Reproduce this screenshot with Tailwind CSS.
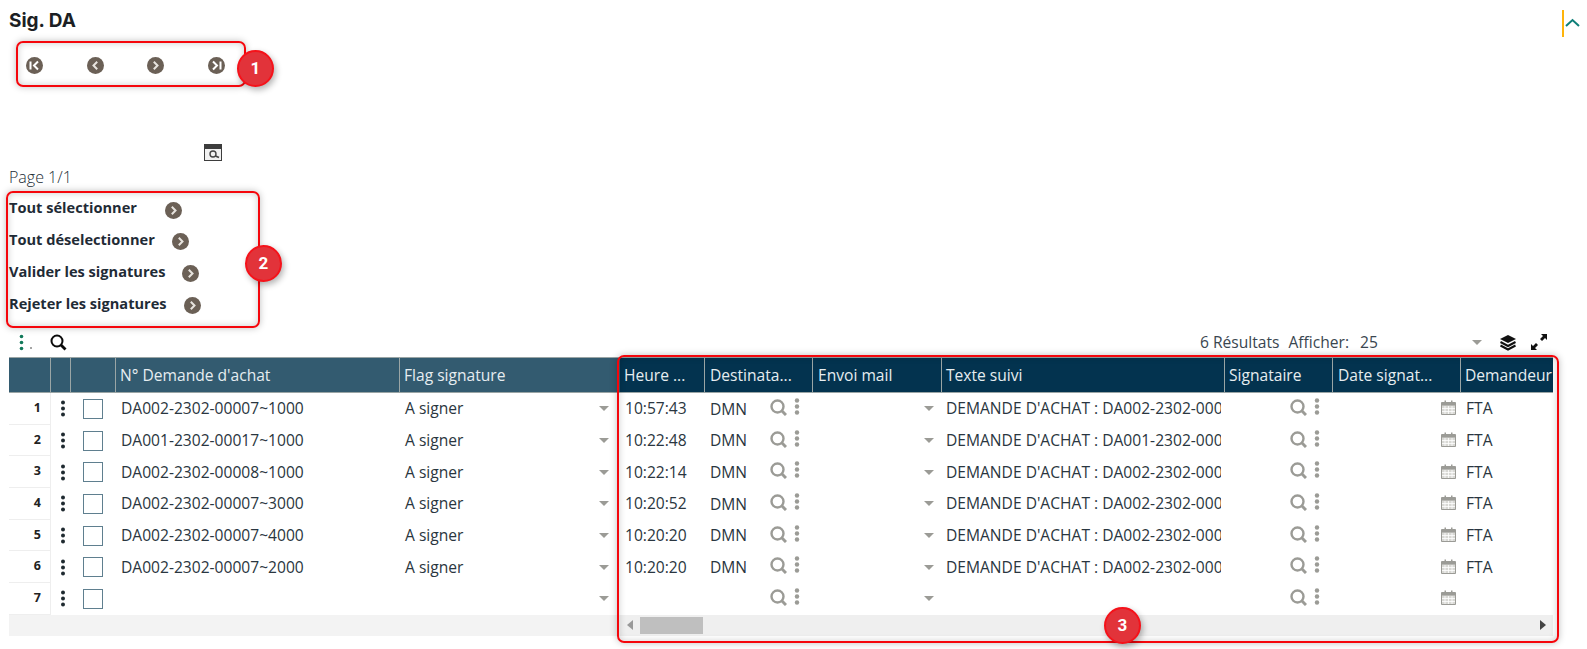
<!DOCTYPE html>
<html lang="fr">
<head>
  <meta charset="UTF-8">
  <title>Sig. DA</title>
  <script src="https://cdn.jsdelivr.net/npm/@tailwindcss/browser@4"></script>
</head>
<body class="bg-white font-['Open_Sans',sans-serif] text-[#2b3a45] overflow-hidden">
  <svg class="hidden">
    <symbol id="first" viewBox="0 0 17 17"><circle cx="8.5" cy="8.5" r="8.5" fill="#6b6056"/><path d="M4.5 4.5v8M12 4.5L8 8.5l4 4" fill="none" stroke="#fff" stroke-width="2"/></symbol>
    <symbol id="prev" viewBox="0 0 17 17"><circle cx="8.5" cy="8.5" r="8.5" fill="#6b6056"/><path d="M10.2 4.8L6.5 8.5l3.7 3.7" fill="none" stroke="#e8e4df" stroke-width="2"/></symbol>
    <symbol id="next" viewBox="0 0 17 17"><circle cx="8.5" cy="8.5" r="8.5" fill="#6b6056"/><path d="M6.8 4.8l3.7 3.7-3.7 3.7" fill="none" stroke="#e8e4df" stroke-width="2"/></symbol>
    <symbol id="last" viewBox="0 0 17 17"><circle cx="8.5" cy="8.5" r="8.5" fill="#6b6056"/><path d="M5 4.5l4 4-4 4M12.5 4.5v8" fill="none" stroke="#fff" stroke-width="2"/></symbol>
    <symbol id="mag" viewBox="0 0 17 17"><circle cx="7.500" cy="7.500" r="6" fill="none" stroke="#9b9b96" stroke-width="2.400"/><path d="M12 12l4 4" stroke="#9b9b96" stroke-width="3"/></symbol>
    <symbol id="vdots" viewBox="0 0 6 17"><circle cx="3" cy="2.5" r="2.2" fill="#9b9b96"/><circle cx="3" cy="8.5" r="2.2" fill="#9b9b96"/><circle cx="3" cy="14.5" r="2.2" fill="#9b9b96"/></symbol>
    <symbol id="kebab" viewBox="0 0 6 17"><circle cx="3" cy="2.5" r="2" fill="#1f2a30"/><circle cx="3" cy="8.5" r="2" fill="#1f2a30"/><circle cx="3" cy="14.5" r="2" fill="#1f2a30"/></symbol>
    <symbol id="cal" viewBox="0 0 15 15"><path d="M.5 2.5h14v12H.5z" fill="#d8d8d4" stroke="#9b9b96"/><path d="M1 2.500h13v3H1z" fill="#9b9b96"/><path d="M3.500.5H5v3H3.500zM10 .5h1.500v3H10z" fill="#9b9b96"/><path d="M4 6v8M7.500 6v8M11 6v8M1 8.500h13M1 11.500h13" stroke="#fff" stroke-width=".8"/></symbol>
    <symbol id="caret" viewBox="0 0 10 5"><path d="M0 0h10L5 5z" fill="#9b9b96"/></symbol>
  </svg>

  <div class="relative w-[1587px] h-[649px] pl-[9px]">
    <!-- en-tete -->
    <div class="h-[42px] flex items-center font-['Inter',sans-serif] font-bold text-[19px] text-[#1c1f24]">Sig. DA</div>
    <div class="h-[46px] w-[199px] ml-[17px] flex items-center justify-between">
      <svg class="w-[17px] h-[17px]"><use href="#first"/></svg>
      <svg class="w-[17px] h-[17px]"><use href="#prev"/></svg>
      <svg class="w-[17px] h-[17px]"><use href="#next"/></svg>
      <svg class="w-[17px] h-[17px]"><use href="#last"/></svg>
    </div>
    <svg class="mt-[56px] ml-[195px] w-[18px] h-[17px]" viewBox="0 0 18 17">
      <path d="M0 0h18v17H0z" fill="#3d3d3d"/><path d="M1 5h16v11H1z" fill="#f1f1f1"/>
      <circle cx="9" cy="10" r="3" fill="none" stroke="#444" stroke-width="1.400"/><path d="M11.500 12l3.500 1.500" stroke="#444" stroke-width="1.800"/>
    </svg>
    <div class="mt-[4px] h-[24px] flex items-center text-[16px] font-light text-[#222d36]">Page 1/1</div>

    <!-- actions -->
    <div class="mt-[3px] flex flex-col font-bold text-[14.600px] text-[#1f2b36]">
      <div class="h-[32px] flex items-center">Tout sélectionner<svg class="ml-[28px] mt-[5px] w-[17px] h-[17px]"><use href="#next"/></svg></div>
      <div class="h-[32px] flex items-center">Tout déselectionner<svg class="ml-[17px] mt-[3px] w-[17px] h-[17px]"><use href="#next"/></svg></div>
      <div class="h-[32px] flex items-center">Valider les signatures<svg class="ml-[17px] mt-[3px] w-[17px] h-[17px]"><use href="#next"/></svg></div>
      <div class="h-[32px] flex items-center">Rejeter les signatures<svg class="ml-[17px] mt-[3px] w-[17px] h-[17px]"><use href="#next"/></svg></div>
    </div>

    <!-- barre d'outils -->
    <div class="mt-[7px] h-[30px] w-[1544px] pr-[5px] flex items-center text-[15.600px] text-[#3a4650]">
      <svg class="ml-[9px] w-[16px] h-[17px]" viewBox="0 0 16 17">
        <circle cx="3.500" cy="2.500" r="1.800" fill="#11795a"/><circle cx="3.500" cy="8.500" r="1.800" fill="#11795a"/><circle cx="3.500" cy="14.500" r="1.800" fill="#11795a"/><circle cx="13" cy="14" r=".8" fill="#333"/>
      </svg>
      <svg class="ml-[16px] w-[17px] h-[17px]" viewBox="0 0 17 17"><circle cx="7" cy="7" r="5.500" fill="none" stroke="#0b0b0b" stroke-width="2"/><path d="M11 11l4.500 4.500" stroke="#0b0b0b" stroke-width="2.800"/></svg>
      <span class="ml-auto mt-[2px]">6 Résultats</span>
      <span class="ml-[9px] mt-[2px]">Afficher:</span>
      <span class="ml-[11px] mt-[2px] w-[112px]">25</span>
      <svg class="w-[10px] h-[5px]"><use href="#caret"/></svg>
      <svg class="ml-[17px] w-[18px] h-[17px]" viewBox="0 0 18 17">
        <path d="M9 1l8 4-8 4-8-4z" fill="#111"/><path d="M1.500 8L9 12l7.500-4M1.500 11.500L9 15.500l7.500-4" fill="none" stroke="#111" stroke-width="2"/>
      </svg>
      <svg class="ml-[13px] w-[18px] h-[18px]" viewBox="0 0 18 18">
        <path d="M11 1h6v6l-2-2-3 3-2-2 3-3zM7 17H1v-6l2 2 3-3 2 2-3 3z" fill="#111"/>
      </svg>
    </div>

    <!-- tableau -->
    <div id="grid" class="w-[1544px] grid grid-cols-[42px_20px_45px_284px_220px_85px_108px_129px_283px_108px_128px_92px] grid-rows-[36px_repeat(7,31.700px)] text-[15.600px] text-[#2a3640]">
      <div class="bg-[#335b70] border-y border-r border-[#9aa5a5]"></div>
      <div class="bg-[#335b70] border-y border-r border-[#9aa5a5]"></div>
      <div class="bg-[#335b70] border-y border-r border-[#9aa5a5]"></div>
      <div class="bg-[#335b70] border-y border-r border-[#9aa5a5] flex items-center pl-[4px] pt-[2px] text-[#e6edf0]">N° Demande d'achat</div>
      <div class="bg-[#335b70] border-y border-[#9aa5a5] flex items-center pl-[4px] pt-[2px] text-[#e6edf0]">Flag signature</div>
      <div class="bg-[#03334f] border-y border-r border-[#9aa5a5] flex items-center pl-[4px] pt-[2px] text-[#e6edf0]">Heure ...</div>
      <div class="bg-[#03334f] border-y border-r border-[#9aa5a5] flex items-center pl-[5px] pt-[2px] text-[#e6edf0]">Destinata...</div>
      <div class="bg-[#03334f] border-y border-r border-[#9aa5a5] flex items-center pl-[5px] pt-[2px] text-[#e6edf0]">Envoi mail</div>
      <div class="bg-[#03334f] border-y border-r border-[#9aa5a5] flex items-center pl-[4px] pt-[2px] text-[#e6edf0]">Texte suivi</div>
      <div class="bg-[#03334f] border-y border-r border-[#9aa5a5] flex items-center pl-[4px] pt-[2px] text-[#e6edf0]">Signataire</div>
      <div class="bg-[#03334f] border-y border-r border-[#9aa5a5] flex items-center pl-[5px] pt-[2px] text-[#e6edf0]">Date signat...</div>
      <div class="bg-[#03334f] border-y border-[#9aa5a5] flex items-center pl-[4px] pt-[2px] text-[#e6edf0] overflow-hidden whitespace-nowrap">Demandeur</div>
    </div>

    <!-- ascenseur -->
    <div class="w-[1544px] h-[21px] flex">
      <div class="w-[611px] bg-[#f3f3f3]"></div>
      <div class="w-[933px] bg-[#efefef] flex items-center relative">
        <svg class="ml-[7px] w-[6px] h-[10px]" viewBox="0 0 6 10"><path d="M6 0v10L0 5z" fill="#999"/></svg>
        <div class="ml-[7px] w-[63px] h-[17px] bg-[#bfbfbf]"></div>
        <svg class="ml-auto mr-[7px] w-[6px] h-[10px]" viewBox="0 0 6 10"><path d="M0 0v10l6-5z" fill="#444"/></svg>
      </div>
    </div>

    <!-- replier -->
    <div class="absolute left-[1562px] top-[10px] w-[2px] h-[27px] bg-[#ffb40a]"></div>
    <svg class="absolute left-[1565px] top-[18px] w-[15px] h-[10px]" viewBox="0 0 15 10"><path d="M1 8L7.500 2 14 8" fill="none" stroke="#0f7f78" stroke-width="2"/></svg>

    <!-- annotations -->
    <div class="absolute left-[16px] top-[41px] w-[230px] h-[46px] border-2 border-[#f5060c] rounded-[7px] shadow-[0_0_7px_rgba(0,0,0,0.25),inset_0_0_7px_rgba(0,0,0,0.2)]"></div>
    <div class="absolute left-[237px] top-[50px] w-[37px] h-[37px] rounded-full bg-[#e2333a] border-2 border-[#f5121a] shadow-[2px_3px_6px_rgba(0,0,0,0.3)] flex items-center justify-center font-['Roboto',sans-serif] font-bold text-[17px] text-white">1</div>
    <div class="absolute left-[6px] top-[191px] w-[254px] h-[137px] border-2 border-[#f5060c] rounded-[7px] shadow-[0_0_7px_rgba(0,0,0,0.25),inset_0_0_7px_rgba(0,0,0,0.2)]"></div>
    <div class="absolute left-[245px] top-[245px] w-[37px] h-[37px] rounded-full bg-[#e2333a] border-2 border-[#f5121a] shadow-[2px_3px_6px_rgba(0,0,0,0.3)] flex items-center justify-center font-['Roboto',sans-serif] font-bold text-[17px] text-white">2</div>
    <div class="absolute left-[617px] top-[355px] w-[942px] h-[288px] border-2 border-[#f5060c] rounded-[7px] shadow-[0_0_7px_rgba(0,0,0,0.25),inset_0_0_7px_rgba(0,0,0,0.2)]"></div>
    <div class="absolute left-[1104px] top-[607px] w-[37px] h-[37px] rounded-full bg-[#e2333a] border-2 border-[#f5121a] shadow-[2px_3px_6px_rgba(0,0,0,0.3)] flex items-center justify-center font-['Roboto',sans-serif] font-bold text-[17px] text-white">3</div>
  </div>

  <script>
    const rows = [
      ['DA002-2302-00007~1000', '10:57:43', 'DA002-2302-00007'],
      ['DA001-2302-00017~1000', '10:22:48', 'DA001-2302-00017'],
      ['DA002-2302-00008~1000', '10:22:14', 'DA002-2302-00008'],
      ['DA002-2302-00007~3000', '10:20:52', 'DA002-2302-00007'],
      ['DA002-2302-00007~4000', '10:20:20', 'DA002-2302-00007'],
      ['DA002-2302-00007~2000', '10:20:20', 'DA002-2302-00007'],
      ['', '', '']
    ];
    const caret = `<svg class="w-[10px] h-[5px]"><use href="#caret"/></svg>`;
    const lookup = `<svg class="-mt-[3px] w-[17px] h-[17px]"><use href="#mag"/></svg><svg class="-mt-[5px] ml-[7px] w-[6px] h-[17px]"><use href="#vdots"/></svg>`;

    // les lignes ont toutes les memes colonnes, seul le contenu change
    document.getElementById('grid').insertAdjacentHTML('beforeend', rows.map((r, i) => {
      const filled = r[0] !== '';
      return `
      <div class="border-b border-r border-[#eeeeee] flex items-center justify-end pr-[9px] font-bold text-[12.500px] text-[#222]">${i + 1}</div>
      <div class="flex items-center justify-center pl-[4px]"><svg class="w-[6px] h-[17px]"><use href="#kebab"/></svg></div>
      <div class="flex items-center pl-[12px]"><div class="w-[20px] h-[20px] border border-[#5f7f8f]"></div></div>
      <div class="flex items-center pl-[5px] whitespace-nowrap">${r[0]}</div>
      <div class="flex items-center justify-between pl-[5px] pr-[11px]"><span>${filled ? 'A signer' : ''}</span>${caret}</div>
      <div class="flex items-center pl-[5px]">${r[1]}</div>
      <div class="flex items-center pl-[5px]"><span class="w-[60px] mt-[1px]">${filled ? 'DMN' : ''}</span>${lookup}</div>
      <div class="flex items-center justify-end pr-[8px]">${caret}</div>
      <div class="flex items-center pl-[4px] pr-[4px] overflow-hidden whitespace-nowrap"><span class="overflow-hidden">${filled ? "DEMANDE D'ACHAT : " + r[2] : ''}</span></div>
      <div class="flex items-center justify-end pr-[13px]">${lookup}</div>
      <div class="flex items-center justify-end pr-[5px]"><svg class="-mt-[2px] w-[15px] h-[15px]"><use href="#cal"/></svg></div>
      <div class="flex items-center pl-[5px]">${filled ? 'FTA' : ''}</div>`;
    }).join(''));
  </script>
</body>
</html>
